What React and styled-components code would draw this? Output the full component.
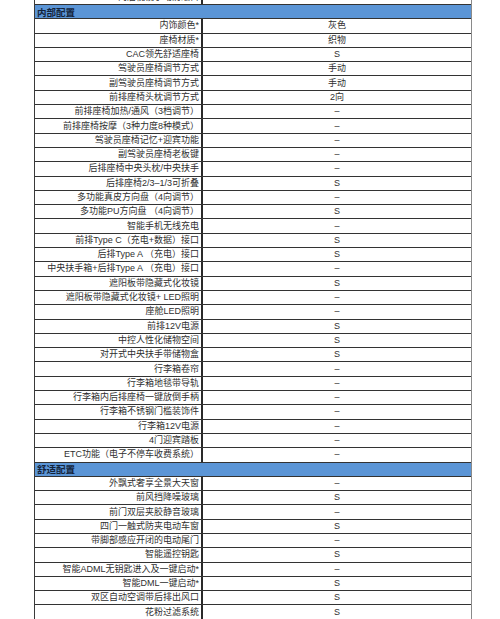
import React from "react";
import styled, { createGlobalStyle } from "styled-components";

const GlobalStyle = createGlobalStyle`
  html, body {
    margin: 0;
    padding: 0;
    background: #fff;
  }
  body {
    width: 500px;
    height: 619px;
    overflow: hidden;
  }
`;

const ROW_H = 14.3;

const Page = styled.div`
  width: 500px;
  height: 619px;
  overflow: hidden;
  padding-left: 34px;
  box-sizing: border-box;
  font-family: "Liberation Sans", "Noto Sans CJK SC", sans-serif;
`;

const Table = styled.div`
  width: 438px;
  margin-top: -10.3px;
  border-left: 1px solid #3a3a3a;
  border-right: 1px solid #8a8a8a;
  box-sizing: border-box;
  display: flex;
  flex-direction: column;
`;

const Row = styled.div`
  display: grid;
  grid-template-columns: 168px 1fr;
  height: ${ROW_H}px;
  box-sizing: border-box;
  border-top: 1px solid #333;
  font-size: 9px;
  color: #2f2f2f;
`;

const Label = styled.div`
  display: flex;
  align-items: center;
  justify-content: flex-end;
  padding-right: 2px;
  border-right: 2px solid #2a2a2a;
  white-space: nowrap;
  overflow: hidden;
  line-height: 1;
`;

const Value = styled.div`
  display: flex;
  align-items: center;
  justify-content: center;
  line-height: 1;
`;

const SectionHead = styled.div`
  height: ${ROW_H}px;
  box-sizing: border-box;
  border-top: 1px solid #333;
  background: #5b95d6;
  display: flex;
  align-items: center;
  padding-left: 2px;
  font-size: 9.5px;
  font-weight: bold;
  color: #14233a;
`;

const sections = [
  {
    title: "内部配置",
    rows: [
      ["内饰颜色*", "灰色"],
      ["座椅材质*", "织物"],
      ["CAC领先舒适座椅", "S"],
      ["驾驶员座椅调节方式", "手动"],
      ["副驾驶员座椅调节方式", "手动"],
      ["前排座椅头枕调节方式", "2向"],
      ["前排座椅加热/通风（3档调节）", "–"],
      ["前排座椅按摩（3种力度8种模式）", "–"],
      ["驾驶员座椅记忆+迎宾功能", "–"],
      ["副驾驶员座椅老板键", "–"],
      ["后排座椅中央头枕/中央扶手", "–"],
      ["后排座椅2/3–1/3可折叠", "S"],
      ["多功能真皮方向盘（4向调节）", "–"],
      ["多功能PU方向盘 （4向调节）", "S"],
      ["智能手机无线充电", "–"],
      ["前排Type C（充电+数据）接口", "S"],
      ["后排Type A （充电）接口", "S"],
      ["中央扶手箱+后排Type A （充电）接口", "–"],
      ["遮阳板带隐藏式化妆镜", "S"],
      ["遮阳板带隐藏式化妆镜+ LED照明", "–"],
      ["座舱LED照明", "–"],
      ["前排12V电源", "S"],
      ["中控人性化储物空间", "S"],
      ["对开式中央扶手带储物盒", "S"],
      ["行李箱卷帘", "–"],
      ["行李箱地毯带导轨", "–"],
      ["行李箱内后排座椅一键放倒手柄", "–"],
      ["行李箱不锈钢门槛装饰件", "–"],
      ["行李箱12V电源", "–"],
      ["4门迎宾踏板", "–"],
      ["ETC功能（电子不停车收费系统）", "–"],
    ],
  },
  {
    title: "舒适配置",
    rows: [
      ["外飘式奢享全景大天窗", "–"],
      ["前风挡降噪玻璃", "S"],
      ["前门双层夹胶静音玻璃", "–"],
      ["四门一触式防夹电动车窗", "S"],
      ["带脚部感应开闭的电动尾门", "–"],
      ["智能遥控钥匙", "S"],
      ["智能ADML无钥匙进入及一键启动*", "–"],
      ["智能DML一键启动*", "S"],
      ["双区自动空调带后排出风口", "S"],
      ["花粉过滤系统", "S"],
    ],
  },
];

const App = () => {
  return (
    <>
      <GlobalStyle />
      <Page>
        <Table>
          <Row>
            <Label>内后视镜手动防眩目</Label>
            <Value></Value>
          </Row>
          {sections.map((sec) => (
            <React.Fragment key={sec.title}>
              <SectionHead>{sec.title}</SectionHead>
              {sec.rows.map((r, idx) => (
                <Row key={idx}>
                  <Label>{r[0]}</Label>
                  <Value>{r[1]}</Value>
                </Row>
              ))}
            </React.Fragment>
          ))}
          <Row />
        </Table>
      </Page>
    </>
  );
};

export default App;
